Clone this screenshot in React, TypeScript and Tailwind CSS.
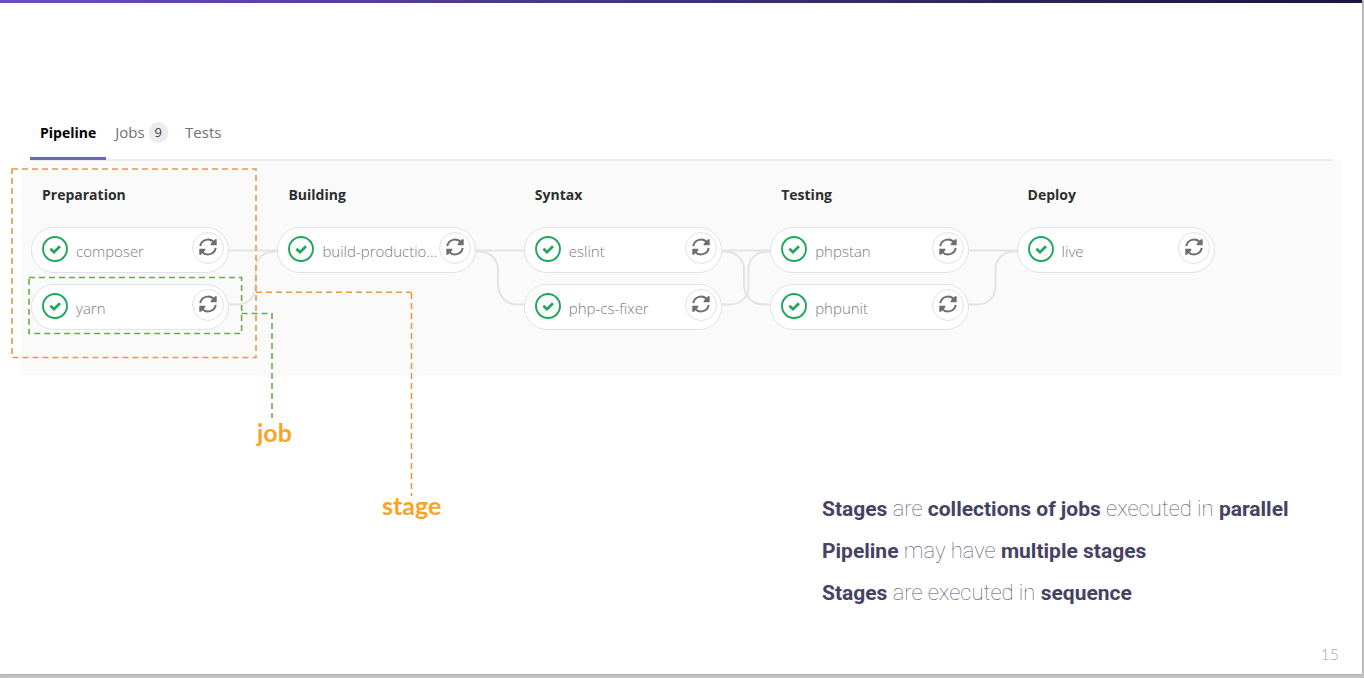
import React from "react";

type Link = "straight" | "up" | "down";

interface Stage {
  name: string;
  jobs: string[];
  links: Link[];
}

const stages: Stage[] = [
  { name: "Preparation", jobs: ["composer", "yarn"], links: ["straight", "up"] },
  { name: "Building", jobs: ["build-productio…"], links: ["straight", "down"] },
  { name: "Syntax", jobs: ["eslint", "php-cs-fixer"], links: ["straight", "up", "down"] },
  { name: "Testing", jobs: ["phpstan", "phpunit"], links: ["straight", "up"] },
  { name: "Deploy", jobs: ["live"], links: [] },
];

const linkPaths: Record<Link, string> = {
  straight: "M0 23.5H48",
  up: "M0 77.5H8C19 77.5 26.5 70 26.5 59V43C26.5 32 34 24.5 46 24.5H48",
  down: "M0 24.5H3C14 24.5 22 32 22 43V57C22 69 30 77.5 41 77.5H48",
};

function CheckIcon() {
  return (
    <svg className="size-[26px] shrink-0" viewBox="0 0 26 26" fill="none" stroke="#1fa65a" aria-hidden="true">
      <circle cx="13" cy="13" r="12" strokeWidth="1.9" />
      <path d="M8.4 12.7 12 16.2 18 10.2" strokeWidth="2.7" />
    </svg>
  );
}

function RetryIcon() {
  return (
    <svg className="size-[18px]" viewBox="0 0 18 18" aria-hidden="true">
      <g fill="none" stroke="#6e6e6e" strokeWidth="2">
        <path d="M1.3 8.2A7.8 7.8 0 0 1 15 4.4" />
        <path d="M16.7 9.8A7.8 7.8 0 0 1 3 13.6" />
      </g>
      <path d="M17.7 1.3V7.3H11.7V5.8L16 1.3ZM.3 16.7V10.7H6.3V12.2L2 16.7Z" fill="#6e6e6e" />
    </svg>
  );
}

function Job({ name }: { name: string }) {
  return (
    <li className="flex h-[46px] items-center rounded-full border border-[#e2e2e2] bg-white pr-1 pb-[2px] pl-[10px]">
      <CheckIcon />
      <span className="mt-1 ml-2 min-w-0 flex-1 text-[15px] leading-5 font-light whitespace-nowrap text-[#7c7c7c]">{name}</span>
      <button
        type="button"
        aria-label={`Retry ${name}`}
        className="mb-[2px] flex size-8 shrink-0 items-center justify-center rounded-full border border-[#e2e2e2] bg-white pb-[2px]"
      >
        <RetryIcon />
      </button>
    </li>
  );
}

function StageColumn({ stage }: { stage: Stage }) {
  return (
    <section>
      <h2 className="pl-[11px] text-[14px] leading-5 font-bold text-[#2e2e2e]">{stage.name}</h2>
      <div className="mt-[22px] flex">
        <ul className="flex min-w-0 flex-1 flex-col gap-[11px]">
          {stage.jobs.map((job) => (
            <Job key={job} name={job} />
          ))}
        </ul>
        <svg className="h-[103px] w-12 shrink-0" viewBox="0 0 48 103" fill="none" stroke="#e3e3e3" strokeWidth="2" aria-hidden="true">
          {stage.links.map((link) => (
            <path key={link} d={linkPaths[link]} />
          ))}
        </svg>
      </div>
    </section>
  );
}

function Callouts() {
  return (
    <div className="pointer-events-none absolute top-0 left-0">
      <svg className="h-[340px] w-[450px]" viewBox="0 1 450 340" fill="none" strokeDasharray="6 4" aria-hidden="true">
        <g stroke="#e8984a" strokeWidth="1.6">
          <path d="M12 9H256V197.500H12Z" />
          <path d="M256 132.300H411.500" />
          <path d="M411.500 133V336" />
        </g>
        <g stroke="#6aab4f" strokeWidth="1.6">
          <path d="M29 117.500H241.600V173.500H29Z" />
          <path d="M241.600 153.500H272V258" />
        </g>
      </svg>
      <span className="absolute top-[256px] left-[257px] font-[Lato] text-[25px] leading-[30px] font-bold text-[#fca326]">job</span>
      <span className="absolute top-[329px] left-[382px] font-[Lato] text-[25px] leading-[30px] font-bold text-[#fca326]">stage</span>
    </div>
  );
}

export default function App() {
  return (
    <div className="flex min-h-screen flex-col bg-[#c4c4c4] pr-[2px] pb-1 font-['Open_Sans',sans-serif]">
      <main className="flex flex-1 flex-col bg-white shadow-[0_0_3px_#999999]">
        <div className="h-[3px] bg-linear-to-r from-[#6b4fbb] to-[#1c1440]" />

        <div role="tablist" aria-label="Pipeline views" className="mt-[103px] mr-[29px] ml-[30px] flex h-[55px] border-b-2 border-[#ececec] text-[15px] text-[#707070]">
          <button type="button" role="tab" aria-selected="true" className="-mb-px border-b-3 border-[#6666c4] px-[10px] pt-[2px] text-[14px] font-bold text-black">
            Pipeline
          </button>
          <button type="button" role="tab" aria-selected="false" className="flex items-center gap-1 px-[9px]">
            Jobs
            <span className="rounded-full bg-[#ececec] px-[6px] text-[13px] leading-[21px] text-[#444444]">9</span>
          </button>
          <button type="button" role="tab" aria-selected="false" className="px-2">
            Tests
          </button>
        </div>

        <div className="relative">
          <div className="mr-5 ml-[21px] grid h-[214px] grid-cols-5 bg-[#fafafa] pt-6 pr-[79px] pl-[10px]">
            {stages.map((stage) => (
              <StageColumn key={stage.name} stage={stage} />
            ))}
          </div>
          <Callouts />
        </div>

        <div className="mt-[113px] w-[540px] self-end font-[Roboto] text-[22px] leading-[42px] font-thin text-[#55516c] [&_strong]:text-[21px] [&_strong]:font-bold [&_strong]:text-[#464263]">
          <p><strong>Stages</strong> are <strong>collections of jobs</strong> executed in <strong>parallel</strong></p>
          <p><strong>Pipeline</strong> may have <strong>multiple stages</strong></p>
          <p><strong>Stages</strong> are executed in <strong>sequence</strong></p>
        </div>

        <footer className="mt-auto pr-[23px] pb-2 text-right font-[Lato] text-[16px] leading-6 font-light text-[#a8a8a8]">15</footer>
      </main>
    </div>
  );
}
